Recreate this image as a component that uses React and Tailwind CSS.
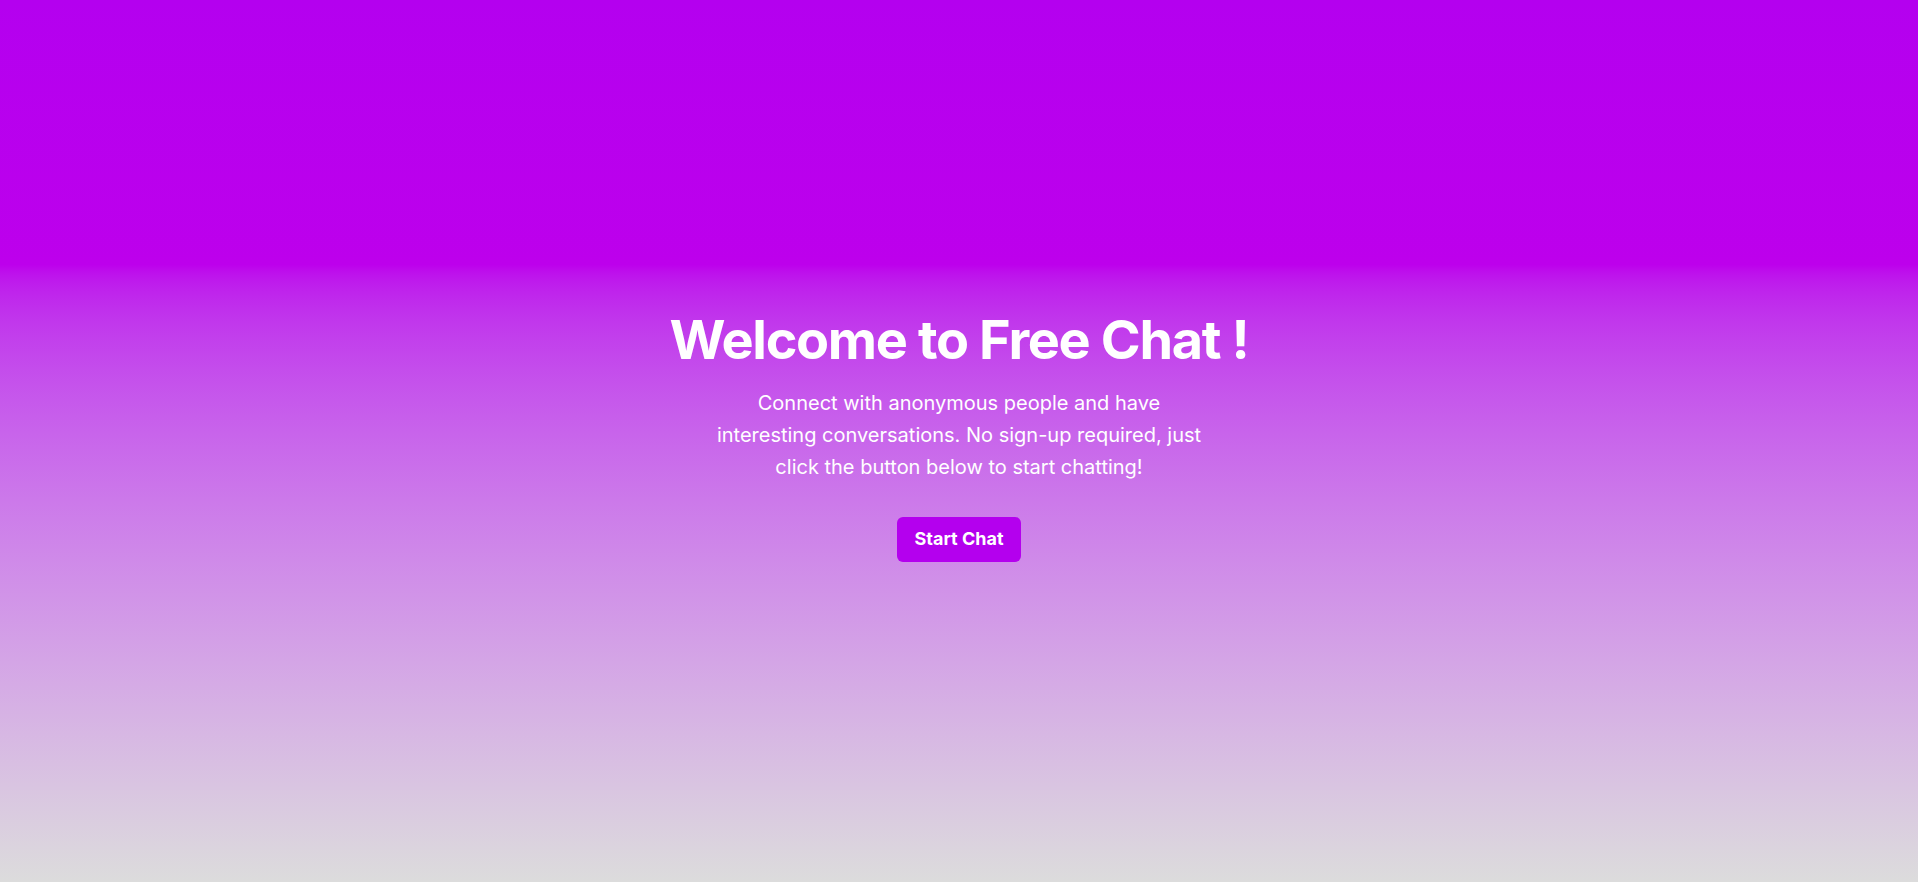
export default function App() {
  return (
    <div
      className="min-h-screen w-full flex items-center justify-center pb-2 bg-linear-to-b from-[#b400ef] via-[#bd00ec] via-30% to-[#dcdcdc]"
      style={{ fontFamily: 'Inter, "Noto Sans", sans-serif' }}
    >
      <div className="flex flex-col items-center text-center">
        <h1 className="text-[54px] leading-none font-bold text-white tracking-tight">
          Welcome to Free Chat !
        </h1>
        <p className="mt-5 max-w-[500px] text-xl leading-8 text-white">
          Connect with anonymous people and have interesting conversations. No sign-up required, just click the button below to start chatting!
        </p>
        <button className="mt-[34px] h-[45px] px-[17px] rounded-md bg-[#b400ee] text-white text-lg font-bold">
          Start Chat
        </button>
      </div>
    </div>
  );
}
